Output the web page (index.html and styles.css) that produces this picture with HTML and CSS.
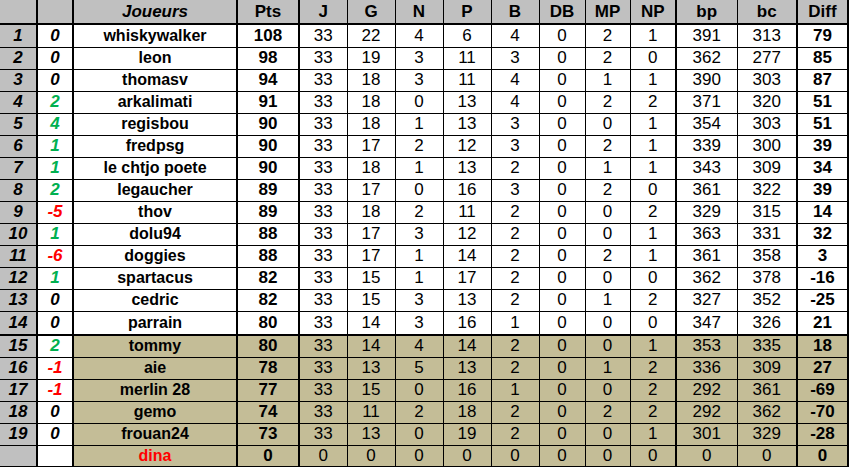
FILE: index.html
```html
<!DOCTYPE html>
<html lang="fr">
<head>
<meta charset="utf-8">
<title>Classement</title>
<link rel="stylesheet" href="styles.css">
</head>
<body>
<table class="standings">
  <colgroup>
    <col class="c-rank"><col class="c-delta"><col class="c-name"><col class="c-pts">
    <col class="c-sm"><col class="c-sm"><col class="c-sm"><col class="c-sm"><col class="c-sm">
    <col class="c-db"><col class="c-mp"><col class="c-np">
    <col class="c-bp"><col class="c-bc"><col class="c-diff">
  </colgroup>
  <thead>
    <tr class="head">
      <th class="rank"></th><th class="delta"></th><th class="name"><i>Joueurs</i></th><th class="pts">Pts</th>
      <th>J</th><th>G</th><th>N</th><th>P</th><th>B</th><th>DB</th><th>MP</th><th class="np">NP</th><th class="bp">bp</th><th class="bc">bc</th><th class="diff">Diff</th>
    </tr>
  </thead>
  <tbody>
    <tr class="first"><td class="rank">1</td><td class="delta">0</td><td class="name">whiskywalker</td><td class="pts">108</td><td>33</td><td>22</td><td>4</td><td>6</td><td>4</td><td>0</td><td>2</td><td class="np">1</td><td class="bp">391</td><td class="bc">313</td><td class="diff">79</td></tr>
    <tr><td class="rank">2</td><td class="delta">0</td><td class="name">leon</td><td class="pts">98</td><td>33</td><td>19</td><td>3</td><td>11</td><td>3</td><td>0</td><td>2</td><td class="np">0</td><td class="bp">362</td><td class="bc">277</td><td class="diff">85</td></tr>
    <tr><td class="rank">3</td><td class="delta">0</td><td class="name">thomasv</td><td class="pts">94</td><td>33</td><td>18</td><td>3</td><td>11</td><td>4</td><td>0</td><td>1</td><td class="np">1</td><td class="bp">390</td><td class="bc">303</td><td class="diff">87</td></tr>
    <tr><td class="rank">4</td><td class="delta up">2</td><td class="name">arkalimati</td><td class="pts">91</td><td>33</td><td>18</td><td>0</td><td>13</td><td>4</td><td>0</td><td>2</td><td class="np">2</td><td class="bp">371</td><td class="bc">320</td><td class="diff">51</td></tr>
    <tr><td class="rank">5</td><td class="delta up">4</td><td class="name">regisbou</td><td class="pts">90</td><td>33</td><td>18</td><td>1</td><td>13</td><td>3</td><td>0</td><td>0</td><td class="np">1</td><td class="bp">354</td><td class="bc">303</td><td class="diff">51</td></tr>
    <tr><td class="rank">6</td><td class="delta up">1</td><td class="name">fredpsg</td><td class="pts">90</td><td>33</td><td>17</td><td>2</td><td>12</td><td>3</td><td>0</td><td>2</td><td class="np">1</td><td class="bp">339</td><td class="bc">300</td><td class="diff">39</td></tr>
    <tr><td class="rank">7</td><td class="delta up">1</td><td class="name">le chtjo poete</td><td class="pts">90</td><td>33</td><td>18</td><td>1</td><td>13</td><td>2</td><td>0</td><td>1</td><td class="np">1</td><td class="bp">343</td><td class="bc">309</td><td class="diff">34</td></tr>
    <tr><td class="rank">8</td><td class="delta up">2</td><td class="name">legaucher</td><td class="pts">89</td><td>33</td><td>17</td><td>0</td><td>16</td><td>3</td><td>0</td><td>2</td><td class="np">0</td><td class="bp">361</td><td class="bc">322</td><td class="diff">39</td></tr>
    <tr><td class="rank">9</td><td class="delta down">-5</td><td class="name">thov</td><td class="pts">89</td><td>33</td><td>18</td><td>2</td><td>11</td><td>2</td><td>0</td><td>0</td><td class="np">2</td><td class="bp">329</td><td class="bc">315</td><td class="diff">14</td></tr>
    <tr><td class="rank">10</td><td class="delta up">1</td><td class="name">dolu94</td><td class="pts">88</td><td>33</td><td>17</td><td>3</td><td>12</td><td>2</td><td>0</td><td>0</td><td class="np">1</td><td class="bp">363</td><td class="bc">331</td><td class="diff">32</td></tr>
    <tr><td class="rank">11</td><td class="delta down">-6</td><td class="name">doggies</td><td class="pts">88</td><td>33</td><td>17</td><td>1</td><td>14</td><td>2</td><td>0</td><td>2</td><td class="np">1</td><td class="bp">361</td><td class="bc">358</td><td class="diff">3</td></tr>
    <tr><td class="rank">12</td><td class="delta up">1</td><td class="name">spartacus</td><td class="pts">82</td><td>33</td><td>15</td><td>1</td><td>17</td><td>2</td><td>0</td><td>0</td><td class="np">0</td><td class="bp">362</td><td class="bc">378</td><td class="diff">-16</td></tr>
    <tr><td class="rank">13</td><td class="delta">0</td><td class="name">cedric</td><td class="pts">82</td><td>33</td><td>15</td><td>3</td><td>13</td><td>2</td><td>0</td><td>1</td><td class="np">2</td><td class="bp">327</td><td class="bc">352</td><td class="diff">-25</td></tr>
    <tr class="cut"><td class="rank">14</td><td class="delta">0</td><td class="name">parrain</td><td class="pts">80</td><td>33</td><td>14</td><td>3</td><td>16</td><td>1</td><td>0</td><td>0</td><td class="np">0</td><td class="bp">347</td><td class="bc">326</td><td class="diff">21</td></tr>
    <tr class="low"><td class="rank">15</td><td class="delta up">2</td><td class="name">tommy</td><td class="pts">80</td><td>33</td><td>14</td><td>4</td><td>14</td><td>2</td><td>0</td><td>0</td><td class="np">1</td><td class="bp">353</td><td class="bc">335</td><td class="diff">18</td></tr>
    <tr class="low"><td class="rank">16</td><td class="delta down">-1</td><td class="name">aie</td><td class="pts">78</td><td>33</td><td>13</td><td>5</td><td>13</td><td>2</td><td>0</td><td>1</td><td class="np">2</td><td class="bp">336</td><td class="bc">309</td><td class="diff">27</td></tr>
    <tr class="low"><td class="rank">17</td><td class="delta down">-1</td><td class="name">merlin 28</td><td class="pts">77</td><td>33</td><td>15</td><td>0</td><td>16</td><td>1</td><td>0</td><td>0</td><td class="np">2</td><td class="bp">292</td><td class="bc">361</td><td class="diff">-69</td></tr>
    <tr class="low"><td class="rank">18</td><td class="delta">0</td><td class="name">gemo</td><td class="pts">74</td><td>33</td><td>11</td><td>2</td><td>18</td><td>2</td><td>0</td><td>2</td><td class="np">2</td><td class="bp">292</td><td class="bc">362</td><td class="diff">-70</td></tr>
    <tr class="low"><td class="rank">19</td><td class="delta">0</td><td class="name">frouan24</td><td class="pts">73</td><td>33</td><td>13</td><td>0</td><td>19</td><td>2</td><td>0</td><td>0</td><td class="np">1</td><td class="bp">301</td><td class="bc">329</td><td class="diff">-28</td></tr>
    <tr class="low last"><td class="rank"></td><td class="delta"></td><td class="name out">dina</td><td class="pts">0</td><td>0</td><td>0</td><td>0</td><td>0</td><td>0</td><td>0</td><td>0</td><td class="np">0</td><td class="bp">0</td><td class="bc">0</td><td class="diff">0</td></tr>
  </tbody>
</table>
</body>
</html>
```
FILE: styles.css
```css
html, body {
  margin: 0;
  padding: 0;
  background: #ffffff;
}

.standings {
  border-collapse: collapse;
  table-layout: fixed;
  width: 849px;
  font-family: "Liberation Sans", Arial, sans-serif;
  font-size: 17px;
  color: #000000;
}

.c-rank { width: 37px; }
.c-delta { width: 36px; }
.c-name { width: 164px; }
.c-pts { width: 62px; }
.c-sm { width: 48px; }
.c-db { width: 46px; }
.c-mp { width: 45px; }
.c-np { width: 46px; }
.c-bp { width: 61px; }
.c-bc { width: 60px; }
.c-diff { width: 51px; }

.standings th,
.standings td {
  padding: 0;
  text-align: center;
  vertical-align: middle;
  line-height: 18px;
  border: 1px solid #000000;
  white-space: nowrap;
  overflow: hidden;
}

.standings tr { height: 22px; }
.standings tr.head { height: 24px; }
.standings tr.first { height: 23px; }
.standings tr.cut { height: 24px; }

.standings th {
  background: #c0c0c0;
  font-weight: bold;
  border-top: none;
  border-bottom: 2px solid #000000;
}

.standings th.rank,
.standings td.rank {
  border-left: none;
}

.rank,
.delta,
.name,
.pts {
  border-right: 2px solid #000000 !important;
}

.np,
.bc,
.diff {
  border-right: 2px solid #000000 !important;
}

.standings td.rank {
  background: #c0c0c0;
  font-weight: bold;
  font-style: italic;
}

.standings td.delta {
  font-weight: bold;
  font-style: italic;
  background: #ffffff;
}

.delta.up { color: #00b050; }
.delta.down { color: #ff0000; }

.standings td.name,
.standings td.pts,
.standings td.diff {
  font-weight: bold;
}

.standings td.name { font-size: 16px; }

.standings td.out { color: #ff0000; }

.standings tr.cut td { border-bottom: 2px solid #000000; }
.standings tr.low td { background: #c4bd97; }
.standings tr.low td.rank { background: #c0c0c0; }
.standings tr.low td.delta { background: #ffffff; }
.standings tr.last td { border-bottom: 2px solid #000000; }
```
